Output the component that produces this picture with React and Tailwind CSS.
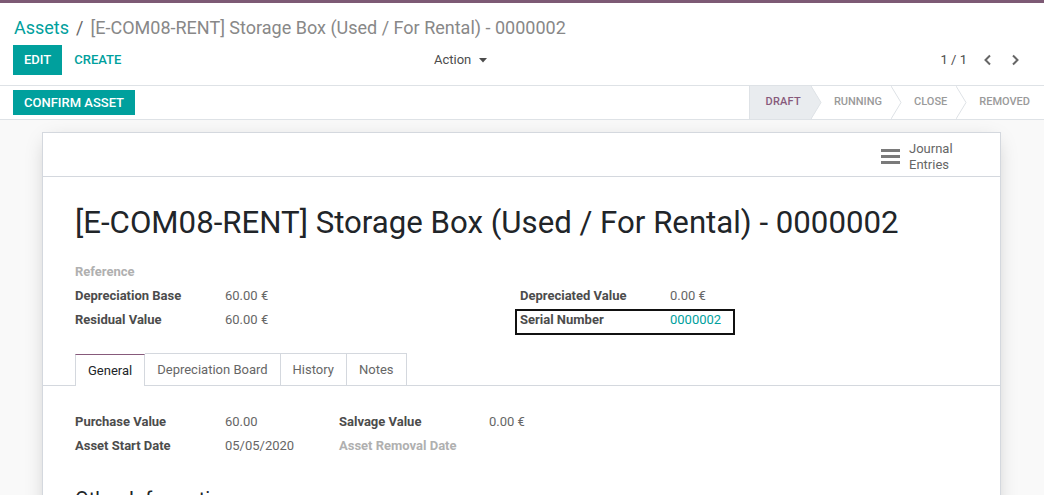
import React from "react";

const font = { fontFamily: "Roboto, 'Noto Sans', sans-serif" };

function Chevron({ fill }) {
  return (
    <svg className="absolute top-0 -right-[10px] h-full w-[11px] z-10" viewBox="0 0 11 33" preserveAspectRatio="none">
      <polygon points="0,0 10,16.5 0,33" fill={fill} />
      <polyline points="0,0 10,16.5 0,33" fill="none" stroke="#dee2e6" strokeWidth="1" />
    </svg>
  );
}

function Status({ label, active, last }) {
  return (
    <div
      className={`relative flex items-center h-full text-[11px] font-medium uppercase ${
        active ? "bg-[#e9ecef] text-[#875A7B] font-bold pl-[16px] pr-[11px] border-l border-[#dee2e6]" : "text-[#9a9a9a] pl-[22px] pr-[10px]"
      }`}
    >
      <span className={active ? "tracking-[0.2px]" : ""}>{label}</span>
      {!last && <Chevron fill={active ? "#e9ecef" : "#ffffff"} />}
    </div>
  );
}

function Field({ label, value, muted, valueClass = "text-[#666]" }) {
  return (
    <div className="flex h-[24px] items-center text-[13px]">
      <div className={`w-[150px] shrink-0 font-bold ${muted ? "text-[#b0b0b0]" : "text-[#4c4c4c]"}`}>{label}</div>
      {value && <div className={valueClass}>{value}</div>}
    </div>
  );
}

export default function App() {
  return (
    <div style={font} className="w-[1044px] h-[495px] overflow-hidden bg-[#f9f9f9] flex flex-col">
      {/* control panel */}
      <div className="bg-white border-t-[3px] border-[#7d5a75] shrink-0">
        <div className="pl-[14px] pt-[16px] h-[34px] flex items-center text-[18px] leading-none">
          <span className="text-[#00A09D]">Assets</span>
          <span className="text-[#666] mx-[7px]">/</span>
          <span className="text-[#888]">[E-COM08-RENT] Storage Box (Used / For Rental) - 0000002</span>
        </div>
        <div className="flex items-center h-[30px] mt-[8px] pl-[13px] pr-[24px] mb-[10px]">
          <div className="w-[431px] flex items-center">
            <button className="h-[30px] px-[11px] bg-[#00A09D] text-white text-[13px] font-medium uppercase">Edit</button>
            <button className="h-[30px] ml-[1px] px-[11px] text-[#00A09D] text-[13px] font-medium uppercase">Create</button>
          </div>
          <div className="flex items-center text-[13px] text-[#4c4c4c] ml-[-10px]">
            Action
            <svg className="ml-[8px]" width="8" height="5" viewBox="0 0 8 5"><polygon points="0,0 8,0 4,4.5" fill="#4c4c4c" /></svg>
          </div>
          <div className="ml-auto flex items-center text-[13px] text-[#4c4c4c]">
            <span>1 / 1</span>
            <svg className="ml-[16px]" width="10" height="12" viewBox="0 0 10 12"><polyline points="7,1.5 2.5,6 7,10.5" fill="none" stroke="#666" strokeWidth="2" /></svg>
            <svg className="ml-[17px]" width="10" height="12" viewBox="0 0 10 12"><polyline points="3,1.5 7.5,6 3,10.5" fill="none" stroke="#666" strokeWidth="2" /></svg>
          </div>
        </div>
      </div>
      {/* status bar */}
      <div className="bg-white border-t border-b border-[#dee2e6] h-[35px] flex items-center pl-[13px] shrink-0">
        <button className="h-[25px] px-[11px] bg-[#00A09D] text-white text-[13px] font-medium uppercase">Confirm Asset</button>
        <div className="ml-auto flex h-full pr-[4px]">
          <Status label="Draft" active />
          <Status label="Running" />
          <Status label="Close" />
          <Status label="Removed" last />
        </div>
      </div>
      {/* sheet */}
      <div className="flex-1 pt-[12px] pl-[42px] pr-[43px]">
        <div className="bg-white border border-[#d4d8de] shadow-[0_5px_20px_-6px_rgba(0,0,0,0.25)] h-[600px]">
          <div className="h-[44px] border-b border-[#d4d8de] flex justify-end">
            <div className="w-[130px] flex items-center pl-[11px] pt-[4px]">
              <div className="flex flex-col gap-[3px] w-[19px]">
                <div className="h-[3px] bg-[#7a7a7a]" />
                <div className="h-[3px] bg-[#7a7a7a]" />
                <div className="h-[3px] bg-[#7a7a7a]" />
              </div>
              <div className="ml-[9px] text-[13px] leading-[16px] text-[#666]">
                Journal<br />Entries
              </div>
            </div>
          </div>
          <div className="px-[32px]">
            <h1 className="mt-[26px] text-[31.2px] leading-[40px] text-[#212529]">
              [E-COM08-RENT] Storage Box (Used / For Rental) - 0000002
            </h1>
            <div className="mt-[17px] flex">
              <div className="w-[445px] shrink-0">
                <Field label="Reference" muted />
                <Field label="Depreciation Base" value="60.00 €" />
                <Field label="Residual Value" value="60.00 €" />
              </div>
              <div className="flex-1 pt-[24px]">
                <Field label="Depreciated Value" value="0.00 €" />
                <div className="relative">
                  <Field label="Serial Number" value="0000002" valueClass="text-[#00A09D]" />
                  <div className="absolute left-[-5px] top-[1px] w-[220px] h-[26px] border-2 border-[#111]" />
                </div>
              </div>
            </div>
          </div>
          {/* tabs */}
          <div className="mt-[22px] border-b border-[#d4d8de] pl-[32px] flex h-[32px] items-end">
            <div className="h-[32px] px-[12px] flex items-center text-[13px] text-[#212529] bg-white border-t border-t-[#875A7B] border-x border-x-[#d4d8de] mb-[-1px]">General</div>
            <div className="h-[32px] px-[12px] flex items-center text-[13px] text-[#666] border-t border-r border-[#d4d8de]">Depreciation Board</div>
            <div className="h-[32px] px-[12px] flex items-center text-[13px] text-[#666] border-t border-r border-[#d4d8de]">History</div>
            <div className="h-[32px] px-[12px] flex items-center text-[13px] text-[#666] border-t border-r border-[#d4d8de]">Notes</div>
          </div>
          <div className="px-[32px] pt-[24px]">
            <div className="grid grid-cols-[150px_114px_150px_auto] text-[13px] auto-rows-[24px] items-center">
              <div className="font-bold text-[#4c4c4c]">Purchase Value</div>
              <div className="text-[#666]">60.00</div>
              <div className="font-bold text-[#4c4c4c]">Salvage Value</div>
              <div className="text-[#666]">0.00 €</div>
              <div className="font-bold text-[#4c4c4c]">Asset Start Date</div>
              <div className="text-[#666]">05/05/2020</div>
              <div className="font-bold text-[#b0b0b0]">Asset Removal Date</div>
              <div />
            </div>
            <div className="mt-[26px] text-[20px] text-[#212529]">Other Information</div>
          </div>
        </div>
      </div>
    </div>
  );
}
